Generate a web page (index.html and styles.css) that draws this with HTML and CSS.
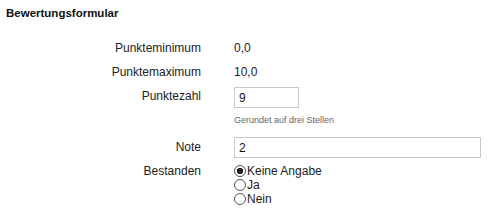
FILE: index.html
```html
<!DOCTYPE html>
<html lang="de">
<head>
    <meta charset="UTF-8">
    <title>Bewertungsformular</title>
    <link rel="stylesheet" href="styles.css">
</head>
<body>
    <h1 class="title">Bewertungsformular</h1>

    <form class="form">
        <div class="row">
            <span class="label">Punkteminimum</span>
            <span class="value">0,0</span>
        </div>
        <div class="row">
            <span class="label">Punktemaximum</span>
            <span class="value">10,0</span>
        </div>
        <div class="row row-input">
            <label class="label" for="punkte">Punktezahl</label>
            <div class="value">
                <input type="text" id="punkte" class="field field-short" value="9">
                <p class="hint">Gerundet auf drei Stellen</p>
            </div>
        </div>
        <div class="row row-input">
            <label class="label" for="note">Note</label>
            <div class="value">
                <input type="text" id="note" class="field field-wide" value="2">
            </div>
        </div>
        <div class="row">
            <span class="label">Bestanden</span>
            <div class="value radios">
                <label class="radio"><input type="radio" name="bestanden" checked>Keine Angabe</label>
                <label class="radio"><input type="radio" name="bestanden">Ja</label>
                <label class="radio"><input type="radio" name="bestanden">Nein</label>
            </div>
        </div>
    </form>
</body>
</html>
```

FILE: styles.css
```css
* {
    margin: 0;
    padding: 0;
    box-sizing: border-box;
}

body {
    font-family: 'Liberation Sans', Arial, sans-serif;
    font-size: 12px;
    color: #222;
    background: #fff;
    padding: 6px 6px 0 6px;
}

.title {
    font-size: 11.5px;
    font-weight: bold;
    color: #111;
    line-height: 14px;
    margin-bottom: 19px;
}

.form {
    display: flex;
    flex-direction: column;
}

.row {
    display: grid;
    grid-template-columns: 195px 1fr;
    column-gap: 33px;
    line-height: 18px;
    margin-bottom: 6px;
}

.row-input {
    margin-bottom: 4px;
}

.label {
    text-align: right;
}

.row-input + .row-input .label {
    padding-top: 1px;
}

.field {
    display: block;
    height: 21px;
    border: 1px solid #c8c8c8;
    font-family: 'Liberation Sans', Arial, sans-serif;
    font-size: 12px;
    padding: 2px 4px;
    color: #111;
    outline: none;
}

.field-short {
    width: 65px;
}

.field-wide {
    width: 247px;
}

.hint {
    font-size: 9px;
    line-height: 12px;
    color: #666;
    margin-top: 6px;
    margin-bottom: 7px;
}

.radios {
    display: flex;
    flex-direction: column;
    padding-top: 2px;
}

.radio {
    display: flex;
    align-items: center;
    height: 14px;
    line-height: 14px;
}

.radio input {
    appearance: none;
    width: 12px;
    height: 12px;
    margin: 0 1px 0 0;
    border: 1px solid #555;
    border-radius: 50%;
    background: #fff;
}

.radio input:checked {
    background: radial-gradient(circle, #222 0, #222 3px, #fff 3.5px);
}
```
